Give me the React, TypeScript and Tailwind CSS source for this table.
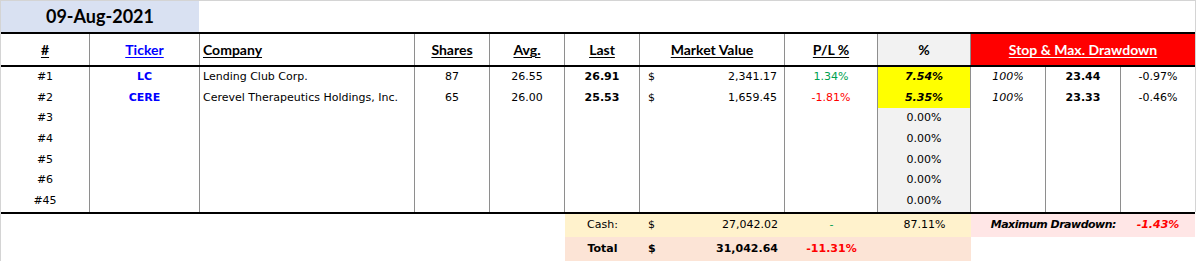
import React from "react";

const COLS = "grid grid-cols-[89px_110px_215px_75px_75px_75px_145px_93px_93px_75px_75px_74px]";
const LINE = "border-r border-[#8e8e8e]";
const DATA = "font-['DejaVu_Sans',sans-serif] text-[11px] text-black";
const HEADBASE = "font-['Lato',sans-serif] font-bold text-[14px]";
const HEAD = `${HEADBASE} underline underline-offset-2 decoration-1`;

type Row = {
  n: string;
  t?: string;
  c?: string;
  s?: string;
  a?: string;
  l?: string;
  mv?: string;
  pl?: string;
  plc?: string;
  pct: string;
  hi?: boolean;
  stop?: string;
  sv?: string;
  dd?: string;
  h: string;
};

const rows: Row[] = [
  { n: "#1", t: "LC", c: "Lending Club Corp.", s: "87", a: "26.55", l: "26.91", mv: "2,341.17", pl: "1.34%", plc: "text-[#00a050]", pct: "7.54%", hi: true, stop: "100%", sv: "23.44", dd: "-0.97%", h: "h-[21px]" },
  { n: "#2", t: "CERE", c: "Cerevel Therapeutics Holdings, Inc.", s: "65", a: "26.00", l: "25.53", mv: "1,659.45", pl: "-1.81%", plc: "text-[#ff0000]", pct: "5.35%", hi: true, stop: "100%", sv: "23.33", dd: "-0.46%", h: "h-[20px]" },
  { n: "#3", pct: "0.00%", h: "h-[21px]" },
  { n: "#4", pct: "0.00%", h: "h-[21px]" },
  { n: "#5", pct: "0.00%", h: "h-[20px]" },
  { n: "#6", pct: "0.00%", h: "h-[21px]" },
  { n: "#45", pct: "0.00%", h: "h-[21px]" },
];

export default function App() {
  return (
    <div className={`w-[1196px] h-[262px] bg-white overflow-hidden ${DATA}`}>
      <div className="border-l border-r border-t border-[#d4d4d4] w-[1196px]">
        {/* Date row */}
        <div className="flex h-[31px]">
          <div className="w-[198px] bg-[#d9e1f2] flex items-center justify-center font-['Lato',sans-serif] font-bold text-[18px] text-black">
            09-Aug-2021
          </div>
        </div>
        <div className="h-[2px] bg-black" />
        {/* Header row */}
        <div className={`${COLS} h-[31px]`}>
          <div className={`${LINE} flex items-center justify-center ${HEAD}`}>#</div>
          <div className={`${LINE} flex items-center justify-center ${HEAD} text-[#0000ff]`}>Ticker</div>
          <div className={`${LINE} flex items-center pl-[3px] ${HEAD}`}>Company</div>
          <div className={`${LINE} flex items-center justify-center ${HEAD}`}>Shares</div>
          <div className={`${LINE} flex items-center justify-center ${HEAD}`}>Avg.</div>
          <div className={`${LINE} flex items-center justify-center ${HEAD}`}>Last</div>
          <div className={`${LINE} flex items-center justify-center ${HEAD}`}>Market Value</div>
          <div className={`${LINE} flex items-center justify-center ${HEAD}`}>P/L %</div>
          <div className={`${LINE} flex items-center justify-center bg-[#f2f2f2] ${HEADBASE}`}>%</div>
          <div className={`col-span-3 flex items-center justify-center bg-[#ff0000] text-white ${HEAD}`}>
            Stop &amp; Max. Drawdown
          </div>
        </div>
        <div className="h-[2px] bg-black" />
        {/* Data rows */}
        {rows.map((r) => (
          <div key={r.n} className={`${COLS} ${r.h}`}>
            <div className={`${LINE} flex items-center justify-center`}>{r.n}</div>
            <div className={`${LINE} flex items-center justify-center font-bold text-[#0000ff]`}>{r.t}</div>
            <div className={`${LINE} flex items-center pl-[3px] whitespace-nowrap`}>{r.c}</div>
            <div className={`${LINE} flex items-center justify-center`}>{r.s}</div>
            <div className={`${LINE} flex items-center justify-center`}>{r.a}</div>
            <div className={`${LINE} flex items-center justify-center font-bold`}>{r.l}</div>
            <div className={`${LINE} flex items-center justify-between pl-[8px] pr-[7px]`}>
              {r.mv ? (
                <>
                  <span>$</span>
                  <span>{r.mv}</span>
                </>
              ) : null}
            </div>
            <div className={`${LINE} flex items-center justify-center ${r.plc ?? ""}`}>{r.pl}</div>
            <div
              className={`${LINE} flex items-center justify-center ${
                r.hi ? "bg-[#ffff00] font-bold italic" : "bg-[#f2f2f2]"
              }`}
            >
              {r.pct}
            </div>
            <div className={`${LINE} flex items-center justify-center italic`}>{r.stop}</div>
            <div className={`${LINE} flex items-center justify-center font-bold`}>{r.sv}</div>
            <div className="flex items-center justify-center">{r.dd}</div>
          </div>
        ))}
      </div>
      <div className="border-l border-[#d4d4d4] w-[1196px]">
        <div className="h-[2px] bg-black mr-[1px]" />
        {/* Cash row */}
        <div className={`${COLS} h-[23px]`}>
          <div className="col-span-5" />
          <div className="bg-[#fff2cc] flex items-center justify-center">Cash:</div>
          <div className="bg-[#fff2cc] flex items-center justify-between pl-[8px] pr-[7px]">
            <span>$</span>
            <span>27,042.02</span>
          </div>
          <div className="bg-[#fff2cc] flex items-center justify-center text-[#00a050]">-</div>
          <div className="bg-[#fff2cc] flex items-center justify-center">87.11%</div>
          <div className="col-span-2 bg-[#ffe6e6] flex items-center justify-end pr-[5px] font-bold italic tracking-[-0.5px]">
            Maximum Drawdown:
          </div>
          <div className="bg-[#ffe6e6] flex items-center justify-center font-bold italic text-[#ff0000]">-1.43%</div>
        </div>
        {/* Total row */}
        <div className={`${COLS} h-[24px]`}>
          <div className="col-span-5" />
          <div className="bg-[#fce4d6] flex items-center justify-center font-bold">Total</div>
          <div className="bg-[#fce4d6] flex items-center justify-between pl-[8px] pr-[7px] font-bold">
            <span>$</span>
            <span>31,042.64</span>
          </div>
          <div className="bg-[#fce4d6] flex items-center justify-center font-bold text-[#ff0000]">-11.31%</div>
          <div className="bg-[#fce4d6]" />
          <div className="col-span-3" />
        </div>
      </div>
    </div>
  );
}
